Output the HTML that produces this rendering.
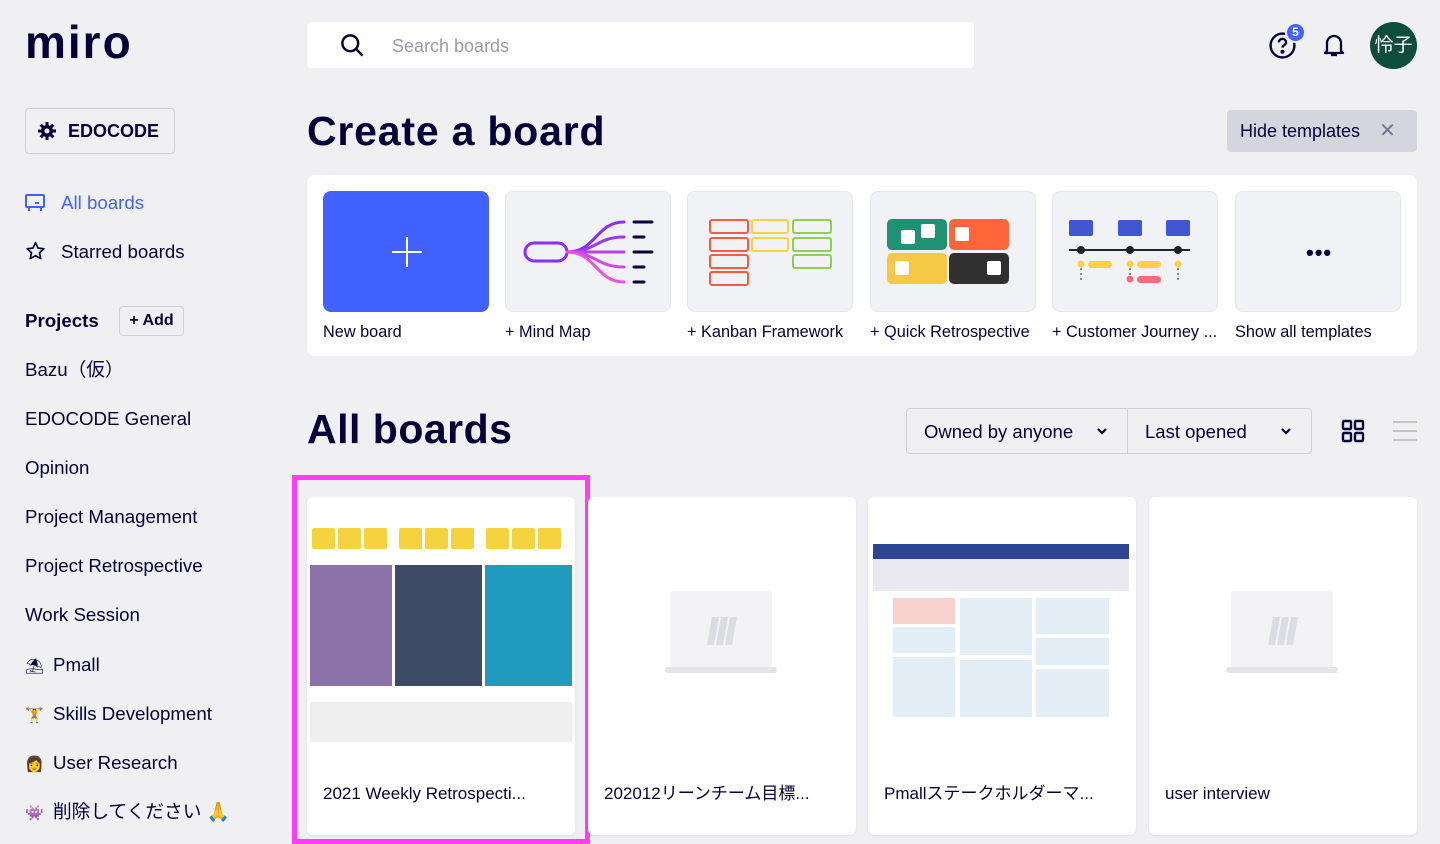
<!DOCTYPE html>
<html><head><meta charset="utf-8"><style>
*{box-sizing:border-box;margin:0;padding:0}
body{width:1440px;height:844px;overflow:hidden;background:#f0f0f3;font-family:"Liberation Sans","Noto Sans CJK JP",sans-serif;color:#050038;position:relative}
.a{position:absolute}
.nav{position:absolute;left:25px;font-size:18.7px;white-space:nowrap;line-height:22px}
.em{display:inline-block;width:28px;font-size:15px}
.tile{position:absolute;top:191px;width:166px;height:121px;border-radius:8px;background:#f1f2f5;border:1px solid #e6e7ec}
.lab{position:absolute;top:322px;font-size:16.3px;white-space:nowrap;line-height:20px}
.card{position:absolute;top:497px;width:268px;height:338px;background:#fff;border-radius:6px;box-shadow:0 1px 2px rgba(0,0,0,.08)}
.card .t{position:absolute;left:16px;top:286px;font-size:17px;white-space:nowrap;line-height:22px}
.ph{position:absolute;left:82px;top:94px;width:102px;height:76px;background:#f3f3f5;border-radius:3px}
.ph2{position:absolute;left:77px;top:170px;width:112px;height:6px;background:#e4e4ea;border-radius:3px}
.sticky{display:inline-block;width:23px;height:21px;background:#f4d33e;margin-right:3px;border-radius:2px}
</style></head><body>

<div class="a" style="left:25px;top:14px;font-size:46px;font-weight:bold;letter-spacing:2px;line-height:56px">miro</div>

<div class="a" style="left:25px;top:108px;width:150px;height:46px;border:1px solid #cfcfd6;border-radius:4px;font-weight:bold;font-size:18px;padding:12px 0 0 42px">EDOCODE</div>
<svg class="a" style="left:37px;top:121px" width="20" height="20" viewBox="0 0 20 20"><g fill="#050038"><circle cx="10" cy="10" r="6"/><rect x="8.5" y="1" width="3" height="18"/><rect x="1" y="8.5" width="18" height="3"/><rect x="8.5" y="1" width="3" height="18" transform="rotate(45 10 10)"/><rect x="8.5" y="1" width="3" height="18" transform="rotate(-45 10 10)"/></g><circle cx="10" cy="10" r="2.5" fill="#f0f0f3"/></svg>

<svg class="a" style="left:25px;top:193px" width="20" height="20" viewBox="0 0 20 20" fill="none" stroke="#4262ff" stroke-width="2"><rect x="1" y="2" width="18" height="12" rx="1"/><path d="M4 14v4M16 14v4M10 10h4"/></svg>
<div class="nav" style="left:61px;top:192px;color:#4262ff">All boards</div>
<svg class="a" style="left:25px;top:241px" width="21" height="20" viewBox="0 0 24 24" fill="none" stroke="#050038" stroke-width="2" stroke-linejoin="round"><path d="M12 2l3 6.5 7 .8-5.2 4.8 1.5 7L12 17.6 5.7 21.1l1.5-7L2 9.3l7-.8z"/></svg>
<div class="nav" style="left:61px;top:241px">Starred boards</div>

<div class="nav" style="top:310px;font-weight:bold">Projects</div>
<div class="a" style="left:119px;top:306px;width:65px;height:30px;border:1px solid #cfcfd6;border-radius:4px;font-size:16px;font-weight:bold;text-align:center;line-height:28px">+ Add</div>
<div class="nav" style="top:359px">Bazu（仮）</div>
<div class="nav" style="top:408px">EDOCODE General</div>
<div class="nav" style="top:457px">Opinion</div>
<div class="nav" style="top:506px">Project Management</div>
<div class="nav" style="top:555px">Project Retrospective</div>
<div class="nav" style="top:604px">Work Session</div>
<div class="nav" style="top:654px"><span class="em">⛱</span>Pmall</div>
<div class="nav" style="top:703px"><span class="em">🏋</span>Skills Development</div>
<div class="nav" style="top:752px"><span class="em">👩</span>User Research</div>
<div class="nav" style="top:801px"><span class="em" style="color:#7a4fd0">👾</span>削除してください <span style="color:#3c8de0">🙏</span></div>

<!-- search -->
<div class="a" style="left:307px;top:22px;width:667px;height:46px;background:#fff;border-radius:4px"></div>
<svg class="a" style="left:339px;top:32px" width="27" height="27" viewBox="0 0 24 24" fill="none" stroke="#050038" stroke-width="2.2"><circle cx="10" cy="10" r="7"/><path d="M15 15l6 6"/></svg>
<div class="a" style="left:392px;top:36px;font-size:18px;color:#9a99ac">Search boards</div>

<!-- top right -->
<svg class="a" style="left:1268px;top:31px" width="29" height="29" viewBox="0 0 28 28" fill="none" stroke="#050038" stroke-width="2.3"><circle cx="14" cy="14" r="11.5"/><path d="M10.5 11a3.5 3.5 0 117 0c0 2.5-3.5 2.5-3.5 5"/><circle cx="14" cy="20" r=".8" fill="#050038"/></svg>
<div class="a" style="left:1285px;top:22px;width:21px;height:21px;border-radius:50%;background:#4262ff;border:2px solid #f0f0f3;color:#fff;font-size:12px;font-weight:bold;text-align:center;line-height:17px">5</div>
<svg class="a" style="left:1320px;top:31px" width="28" height="28" viewBox="0 0 28 28" fill="none" stroke="#050038" stroke-width="2.3" stroke-linejoin="round"><path d="M7 20V12a7 7 0 0114 0v8l2 2H5z"/><path d="M11 24h6"/></svg>
<div class="a" style="left:1370px;top:22px;width:47px;height:47px;border-radius:50%;background:#0e4d3a;color:#fff;font-size:19px;text-align:center;line-height:47px">怜子</div>

<div class="a" style="left:307px;top:108px;font-size:41px;font-weight:bold;letter-spacing:.8px">Create a board</div>
<div class="a" style="left:1227px;top:110px;width:190px;height:42px;background:#d5d5de;border-radius:4px;font-size:18px;padding:10px 0 0 13px;line-height:22px">Hide templates <span style="color:#767590;margin-left:14px;font-size:20px">✕</span></div>

<!-- templates panel -->
<div class="a" style="left:307px;top:175px;width:1110px;height:181px;background:#fff;border-radius:8px"></div>
<div class="tile" style="left:323px;background:#4262ff;border-color:#4262ff"><svg style="position:absolute;left:66px;top:43px" width="34" height="34"><path d="M17 2v30M2 17h30" stroke="#fff" stroke-width="2"/></svg></div>
<div class="tile" style="left:505px"><svg width="166" height="121" fill="none" stroke-linecap="round"><rect x="19" y="51" width="42" height="18" rx="9" stroke="#8b2ef3" stroke-width="3"/><g stroke-width="3"><path d="M61 60C90 60 90 30 118 30" stroke="#8b2ef3"/><path d="M61 60C90 60 90 45 118 45" stroke="#9a38f0"/><path d="M61 60H118" stroke="#b642ec"/><path d="M61 60C90 60 90 75 118 75" stroke="#cf4ae8"/><path d="M61 60C90 60 90 90 118 90" stroke="#ee4fe0"/></g><g stroke="#050038" stroke-width="3"><path d="M128 30h18M128 45h10M128 60h18M128 75h10M128 90h10"/></g></svg></div>
<div class="tile" style="left:687px"><svg width="166" height="121" fill="none" stroke-width="2"><g stroke="#fa5a3e"><rect x="22" y="28" width="38" height="13" rx="2"/><rect x="22" y="46" width="38" height="13" rx="2"/><rect x="22" y="63" width="38" height="13" rx="2"/><rect x="22" y="80" width="38" height="13" rx="2"/></g><g stroke="#fdd13f"><rect x="64" y="28" width="36" height="13" rx="2"/><rect x="64" y="46" width="36" height="13" rx="2"/></g><g stroke="#8fd14f"><rect x="105" y="28" width="38" height="13" rx="2"/><rect x="105" y="46" width="38" height="13" rx="2"/><rect x="105" y="63" width="38" height="13" rx="2"/></g></svg></div>
<div class="tile" style="left:870px"><svg width="166" height="121"><rect x="16" y="27" width="60" height="31" rx="5" fill="#1e9273"/><rect x="78" y="27" width="60" height="31" rx="5" fill="#ff6539"/><rect x="16" y="61" width="60" height="31" rx="5" fill="#f7c844"/><rect x="78" y="61" width="60" height="31" rx="5" fill="#303030"/><g fill="#fff"><rect x="30" y="38" width="14" height="14" rx="2"/><rect x="50" y="32" width="14" height="14" rx="2"/><rect x="84" y="35" width="14" height="14" rx="2"/><rect x="24" y="69" width="14" height="14" rx="2"/><rect x="116" y="69" width="14" height="14" rx="2"/></g></svg></div>
<div class="tile" style="left:1052px"><svg width="166" height="121"><g fill="#4156d4"><rect x="16" y="28" width="24" height="16" rx="2"/><rect x="65" y="28" width="24" height="16" rx="2"/><rect x="113" y="28" width="24" height="16" rx="2"/></g><path d="M16 58H137" stroke="#222" stroke-width="2"/><g fill="#222"><circle cx="28" cy="58" r="4"/><circle cx="77" cy="58" r="4"/><circle cx="125" cy="58" r="4"/></g><g stroke="#222" stroke-dasharray="2 3"><path d="M28 76v14M77 76v14M125 76v14"/></g><g fill="#fdd13f"><circle cx="28" cy="72" r="3.5"/><rect x="35" y="69" width="24" height="7" rx="3.5"/><circle cx="77" cy="72" r="3.5"/><rect x="84" y="69" width="24" height="7" rx="3.5"/><circle cx="125" cy="72" r="3.5"/></g><circle cx="77" cy="87" r="3.5" fill="#f76b7c"/><rect x="84" y="84" width="24" height="7" rx="3.5" fill="#f76b7c"/></svg></div>
<div class="tile" style="left:1235px"><div style="position:absolute;left:70px;top:48px;font-size:22px;font-weight:bold;letter-spacing:1px">•••</div></div>
<div class="lab" style="left:323px">New board</div>
<div class="lab" style="left:505px">+ Mind Map</div>
<div class="lab" style="left:687px">+ Kanban Framework</div>
<div class="lab" style="left:870px">+ Quick Retrospective</div>
<div class="lab" style="left:1052px">+ Customer Journey ...</div>
<div class="lab" style="left:1235px">Show all templates</div>

<div class="a" style="left:307px;top:406px;font-size:41px;font-weight:bold;letter-spacing:.5px">All boards</div>
<div class="a" style="left:906px;top:408px;width:406px;height:46px;border:1px solid #cfcfd6;border-radius:4px"></div>
<div class="a" style="left:1127px;top:408px;width:1px;height:46px;background:#cfcfd6"></div>
<div class="a" style="left:924px;top:421px;font-size:18.5px;line-height:22px">Owned by anyone</div>
<div class="a" style="left:1145px;top:421px;font-size:18.5px;line-height:22px">Last opened</div>
<svg class="a" style="left:1096px;top:426px" width="12" height="10"><path d="M2 3l4 4 4-4" stroke="#050038" stroke-width="2.2" fill="none"/></svg>
<svg class="a" style="left:1280px;top:426px" width="12" height="10"><path d="M2 3l4 4 4-4" stroke="#050038" stroke-width="2.2" fill="none"/></svg>
<svg class="a" style="left:1341px;top:419px" width="24" height="24" fill="none" stroke="#050038" stroke-width="2.4"><rect x="2" y="2" width="8" height="8" rx="1"/><rect x="14" y="2" width="8" height="8" rx="1"/><rect x="2" y="14" width="8" height="8" rx="1"/><rect x="14" y="14" width="8" height="8" rx="1"/></svg>
<svg class="a" style="left:1393px;top:419px" width="24" height="24" stroke="#c4c4cc" stroke-width="2"><path d="M0 3h24M0 12h24M0 21h24"/></svg>

<!-- cards -->
<div class="a" style="left:292px;top:475px;width:298px;height:369px;border:5px solid #ff3df7"></div>
<div class="card" style="left:307px">
 <div style="position:absolute;left:4px;top:31px;width:262px">
  <div style="padding-left:1px"><span class="sticky"></span><span class="sticky"></span><span class="sticky" style="margin-right:12px"></span><span class="sticky"></span><span class="sticky"></span><span class="sticky" style="margin-right:12px"></span><span class="sticky"></span><span class="sticky"></span><span class="sticky"></span></div>
 </div>
 <div style="position:absolute;left:3px;top:68px;width:82px;height:121px;background:#8b72a8"></div>
 <div style="position:absolute;left:88px;top:68px;width:87px;height:121px;background:#3d4b67"></div>
 <div style="position:absolute;left:178px;top:68px;width:87px;height:121px;background:#219bbd"></div>
 <div style="position:absolute;left:3px;top:205px;width:262px;height:40px;background:#efefef"></div>
 <div class="t">2021 Weekly Retrospecti...</div>
</div>
<div class="card" style="left:588px"><div class="ph"></div><div class="ph2"></div><svg class="a" style="left:118px;top:118px" width="32" height="32"><g fill="#dcdce3"><path d="M6 2h7L8 30H1z"/><path d="M15 2h7l-5 28h-7z"/><path d="M24 2h7l-5 28h-7z"/></g></svg><div class="t">202012リーンチーム目標...</div></div>
<div class="card" style="left:868px">
 <div style="position:absolute;left:5px;top:47px;width:256px;height:15px;background:#2d4593"></div>
 <div style="position:absolute;left:5px;top:62px;width:256px;height:32px;background:#e8e8ee"></div>
 <div style="position:absolute;left:25px;top:101px;width:62px;height:26px;background:#f6d1cd"></div>
 <div style="position:absolute;left:25px;top:130px;width:62px;height:26px;background:#e3edf5"></div>
 <div style="position:absolute;left:25px;top:160px;width:62px;height:60px;background:#e3edf5"></div>
 <div style="position:absolute;left:92px;top:101px;width:72px;height:57px;background:#e3edf5"></div>
 <div style="position:absolute;left:92px;top:163px;width:72px;height:57px;background:#e3edf5"></div>
 <div style="position:absolute;left:168px;top:101px;width:73px;height:36px;background:#e3edf5"></div>
 <div style="position:absolute;left:168px;top:141px;width:73px;height:27px;background:#e3edf5"></div>
 <div style="position:absolute;left:168px;top:172px;width:73px;height:48px;background:#e3edf5"></div>
 <div class="t">Pmallステークホルダーマ...</div>
</div>
<div class="card" style="left:1149px"><div class="ph"></div><div class="ph2"></div><svg class="a" style="left:118px;top:118px" width="32" height="32"><g fill="#dcdce3"><path d="M6 2h7L8 30H1z"/><path d="M15 2h7l-5 28h-7z"/><path d="M24 2h7l-5 28h-7z"/></g></svg><div class="t">user interview</div></div>
</body></html>
